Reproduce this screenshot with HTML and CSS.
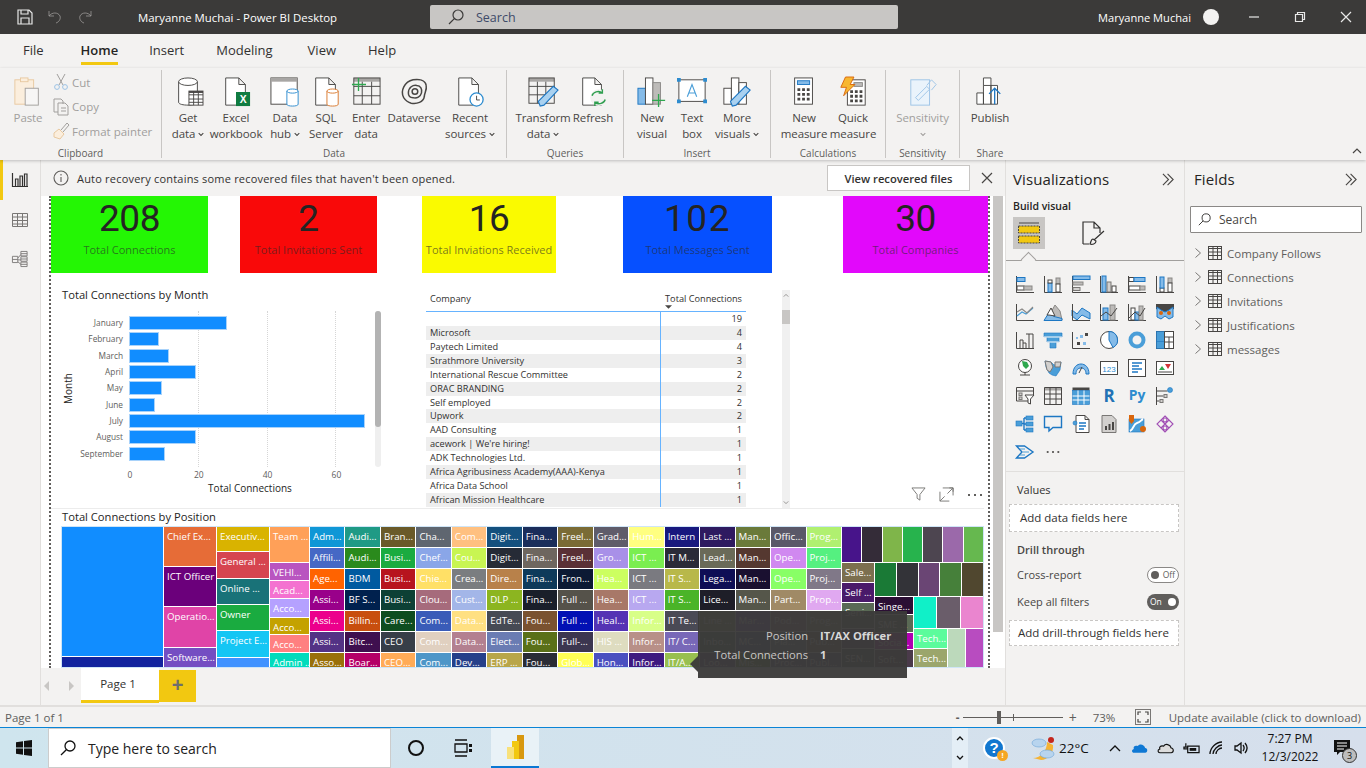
FILE: index.html
```html
<!DOCTYPE html>
<html lang="en">
<head>
<meta charset="utf-8">
<title>Power BI Desktop</title>
<link rel="stylesheet" href="styles.css">
</head>
<body>
<svg class="defs" width="0" height="0" aria-hidden="true">
  <defs>
    <symbol id="i-tbl" viewBox="0 0 14 14"><rect class="ln" x=".5" y=".5" width="13" height="13"/><path class="ln" d="M.5 2.5h13M.5 6h13M.5 9.5h13M5 .5v13M9.5 .5v13"/></symbol>
    <symbol id="i-dbl" viewBox="0 0 14 14"><path class="ln-d" d="M1 1l6 6-6 6M6 1l6 6-6 6"/></symbol>
    <symbol id="i-chev" viewBox="0 0 7 5"><path class="ln-d" d="M.8 .8L3.5 3.6 6.2 .8"/></symbol>
    <symbol id="i-mag" viewBox="0 0 16 16"><circle class="ln-d" cx="10" cy="6" r="5"/><path class="ln-d" d="M6.3 9.7L1 15"/></symbol>
  </defs>
</svg>
<div class="app">
  <header class="titlebar">
    <div class="qat">
      <svg class="qi" viewBox="0 0 16 16"><path class="ln-w" d="M1 1h11l3 3v11H1zM4 1v4h7V1M4 15v-6h8v6"/></svg>
      <svg class="qi dim" viewBox="0 0 16 16"><path class="ln-f" d="M2 2v5h5M2 7c3-4 9-4 11 0 1 3-1 6-4 7"/></svg>
      <svg class="qi dim" viewBox="0 0 16 16"><path class="ln-f" d="M14 2v5H9M14 7C11 3 5 3 3 7c-1 3 1 6 4 7"/></svg>
    </div>
    <div class="doc">Maryanne Muchai - Power BI Desktop</div>
    <div class="searchbox"><svg class="mag" viewBox="0 0 16 16"><use href="#i-mag"/></svg><span>Search</span></div>
    <div class="user">Maryanne Muchai</div>
    <div class="avatar"></div>
    <div class="winctl">
      <svg viewBox="0 0 10 10"><path class="ln-w" d="M0 5h10"/></svg>
      <svg viewBox="0 0 10 10"><path class="ln-w" d="M.5 2.5h7v7h-7zM2.5 2.5v-2h7v7h-2"/></svg>
      <svg viewBox="0 0 10 10"><path class="ln-w" d="M0 0l10 10M10 0L0 10"/></svg>
    </div>
  </header>

  <nav class="tabs">
    <span class="tab t-file">File</span>
    <span class="tab t-home">Home</span>
    <span class="tab t-insert">Insert</span>
    <span class="tab t-model">Modeling</span>
    <span class="tab t-view">View</span>
    <span class="tab">Help</span>
  </nav>

  <section class="ribbon">
    <div class="group g-clip">
      <div class="btns">
        <div class="rb faded w56">
          <svg class="ri" viewBox="0 0 32 32"><rect class="f-or" x="2" y="3" width="20" height="26"/><rect class="f-or" x="8" y="1" width="8" height="4"/><rect class="f-pg" x="13" y="12" width="14" height="18"/></svg>
          <span>Paste</span>
        </div>
        <div class="cliplist">
          <div class="ci"><svg viewBox="0 0 16 18"><path class="ln-f" d="M4 1l6 11M12 1L6 12"/><circle class="ln-bf" cx="4" cy="14" r="2.4"/><circle class="ln-bf" cx="12" cy="14" r="2.4"/></svg><span>Cut</span></div>
          <div class="ci"><svg viewBox="0 0 16 18"><path class="ln-f" d="M1 1h7l2 2v3M1 1v13h4"/><path class="ln-f" d="M5 5h7l3 3v9H5zM8 10h5M8 13h5"/></svg><span>Copy</span></div>
          <div class="ci"><svg viewBox="0 0 16 18"><path class="f-or" d="M1 11l5-4 5 5-4 5-6-2z"/><path class="ln-f" d="M8 8l6-7 2 2-6 7"/></svg><span>Format painter</span></div>
        </div>
      </div>
      <div class="glabel">Clipboard</div>
    </div>

    <div class="group g-data">
      <div class="btns">
        <div class="rb w40"><svg class="ri" viewBox="0 0 32 32"><path class="fw" d="M6 5v22c0 2 5 3 10 3s10-1 10-3V5"/><ellipse class="fw" cx="16" cy="5" rx="10" ry="4"/><rect class="fw" x="17" y="15" width="15" height="15"/><path class="ln" d="M17 19h15M17 23.500h15M17 27h15M22 15v15M27 15v15"/><rect class="fdk" x="17" y="15" width="15" height="2"/></svg><span>Get<br>data <svg class="chev" viewBox="0 0 7 5"><use href="#i-chev"/></svg></span></div>
        <div class="rb w56"><svg class="ri" viewBox="0 0 32 32"><path class="fw" d="M5 1h14l7 7v22H5zM19 1v7h7"/><rect class="fgn" x="16" y="16" width="15" height="15"/><text class="xl" x="23.500" y="28">X</text></svg><span>Excel<br>workbook</span></div>
        <div class="rb w42"><svg class="ri" viewBox="0 0 32 32"><rect class="fw" x="1" y="1" width="28" height="28"/><rect class="fgy" x="1" y="1" width="28" height="4"/><path class="fw-b" d="M18 15v14c0 1.500 3 2 6 2s6-.5 6-2V15"/><ellipse class="fw-b" cx="24" cy="15" rx="6" ry="2.200"/></svg><span>Data<br>hub <svg class="chev" viewBox="0 0 7 5"><use href="#i-chev"/></svg></span></div>
        <div class="rb w40"><svg class="ri" viewBox="0 0 32 32"><path class="fw" d="M5 1h14l7 7v22H5zM19 1v7h7"/><path class="fw-o" d="M17 15v14c0 1.500 3 2 6 2s6-.5 6-2V15"/><ellipse class="fw-o" cx="23" cy="15" rx="6" ry="2.200"/></svg><span>SQL<br>Server</span></div>
        <div class="rb w40"><svg class="ri" viewBox="0 0 32 32"><rect class="fgy" x="3" y="1" width="28" height="4"/><rect class="ln" x="3" y="1" width="28" height="28"/><path class="ln" d="M3 10h28M3 20h28M12 5v24M22 5v24"/><path class="ln-g2" d="M8 1v14M1 8h15"/></svg><span>Enter<br>data</span></div>
        <div class="rb w56"><svg class="ri" viewBox="0 0 32 32"><path class="ln-2" d="M5 22C1 15 6 5 15 3c6-1 13 0 14 6 1 5-2 8-2 12-1 6-8 8-14 7-4-1-6-3-8-6z"/><path class="ln-2" d="M10 17c0-6 5-9 9-8 4 0 6 4 5 8-1 4-5 6-9 5-3 0-5-2-5-5z"/><circle class="ln-2" cx="17" cy="15.500" r="3"/></svg><span>Dataverse</span></div>
        <div class="rb w56"><svg class="ri" viewBox="0 0 32 32"><path class="fw" d="M4 1h14l7 7v22H4zM18 1v7h7"/><circle class="fw-b2" cx="23" cy="24" r="7"/><path class="ln" d="M23 20v4.500h3.500"/></svg><span>Recent<br>sources <svg class="chev" viewBox="0 0 7 5"><use href="#i-chev"/></svg></span></div>
      </div>
      <div class="glabel">Data</div>
    </div>

    <div class="group g-query">
      <div class="btns">
        <div class="rb w54"><svg class="ri" viewBox="0 0 32 32"><rect class="fgy" x="1" y="1" width="27" height="4"/><rect class="ln" x="1" y="1" width="27" height="27"/><path class="ln" d="M1 10h27M1 19h27M10 5v23M19 5v23"/><path class="fb-pen" d="M11 26l2 5 4-1 15-16-5-4z"/></svg><span>Transform<br>data <svg class="chev" viewBox="0 0 7 5"><use href="#i-chev"/></svg></span></div>
        <div class="rb w46"><svg class="ri" viewBox="0 0 32 32"><path class="fw" d="M5 1h13l7 7v22H5zM18 1v7h7"/><circle class="bgk" cx="22" cy="22" r="9"/><path class="ln-g" d="M15 20c1-4 7-6 11-3M29 24c-1 4-7 6-11 3M26 13v4h-4M18 31v-4h4"/></svg><span>Refresh</span></div>
      </div>
      <div class="glabel">Queries</div>
    </div>

    <div class="group g-insert">
      <div class="btns">
        <div class="rb w40"><svg class="ri" viewBox="0 0 32 32"><rect class="bl" x="1" y="12" width="8" height="17"/><rect class="fw" x="9" y="1" width="8" height="28"/><rect class="gr" x="17" y="6" width="8" height="23"/><path class="ln-g2" d="M23 18v14M16 25h14"/></svg><span>New<br>visual</span></div>
        <div class="rb w40"><svg class="ri" viewBox="0 0 32 32"><rect class="fw" x="2" y="3" width="28" height="23"/><path class="ln-b" d="M11 21l5-13 5 13M13 17h6"/><path class="fb2" d="M0 1h4v4H0zM28 1h4v4h-4zM0 24h4v4H0zM28 24h4v4h-4z"/></svg><span>Text<br>box</span></div>
        <div class="rb w50"><svg class="ri" viewBox="0 0 32 32"><rect class="fw" x="2" y="12" width="8" height="17"/><rect class="fw" x="10" y="1" width="8" height="28"/><rect class="fw" x="18" y="6" width="8" height="23"/><path class="fb-pen" d="M9 26l2 5 4-1 15-16-5-4z"/></svg><span>More<br>visuals <svg class="chev" viewBox="0 0 7 5"><use href="#i-chev"/></svg></span></div>
      </div>
      <div class="glabel">Insert</div>
    </div>

    <div class="group g-calc">
      <div class="btns">
        <div class="rb w52"><svg class="ri" viewBox="0 0 32 32"><rect class="fw" x="6" y="1" width="19" height="28"/><rect class="bl" x="9" y="4" width="13" height="4"/><path class="dots" d="M9 12h3v3H9zM14 12h3v3h-3zM19 12h3v3h-3zM9 17h3v3H9zM14 17h3v3h-3zM19 17h3v3h-3zM9 22h3v3H9zM14 22h3v3h-3zM19 22h3v3h-3z"/></svg><span>New<br>measure</span></div>
        <div class="rb w46"><svg class="ri" viewBox="0 0 32 32"><rect class="fw" x="10" y="3" width="19" height="27"/><rect class="gr" x="17" y="6" width="9" height="4"/><path class="dots" d="M13 14h3v3h-3zM18 14h3v3h-3zM23 14h3v3h-3zM13 19h3v3h-3zM18 19h3v3h-3zM23 19h3v3h-3zM13 24h3v3h-3zM18 24h3v3h-3zM23 24h3v3h-3z"/><path class="bolt" d="M8 0h9l-4 8h5L6 20l3-9H3z"/></svg><span>Quick<br>measure</span></div>
      </div>
      <div class="glabel">Calculations</div>
    </div>

    <div class="group g-sens">
      <div class="btns">
        <div class="rb faded wfull"><svg class="ri" viewBox="0 0 32 32"><rect class="f-bf" x="3" y="3" width="20" height="27"/><path class="ln-bf" d="M8 22l12-12 3 3-12 12zM20 9l5-6 5 5-5 6"/></svg><span>Sensitivity<br><svg class="chev" viewBox="0 0 7 5"><use href="#i-chev"/></svg></span></div>
      </div>
      <div class="glabel">Sensitivity</div>
    </div>

    <div class="group g-share">
      <div class="btns">
        <div class="rb wfull"><svg class="ri" viewBox="0 0 32 32"><path class="fw" d="M2 17h7v12H2zM9 9h8v20H9zM9 9V1h8v8M17 9h7v20h-7z"/><path class="ln-b2" d="M21 29V12M15 18l6-6 6 6"/></svg><span>Publish</span></div>
      </div>
      <div class="glabel">Share</div>
    </div>
    <svg class="collapse" viewBox="0 0 10 6"><path class="ln-d" d="M1 5l4-4 4 4"/></svg>
  </section>

  <div class="main">
    <aside class="rail">
      <div class="rail-i on"><svg viewBox="0 0 16 14"><path class="ln-d" d="M.5 0v13.500H16M3.500 6h2.500v7.500H3.500zM8 3h2.500v10.500H8zM12.500 1H15v12.500h-2.500z"/></svg></div>
      <div class="rail-i"><svg viewBox="0 0 16 14"><path class="ln-m" d="M.5 .5h15v13H.5zM.5 4h15M.5 7.500h15M.5 11h15M5.500 .5v13M10.500 .5v13"/></svg></div>
      <div class="rail-i"><svg viewBox="0 0 18 18"><path class="ln-m" d="M.5 6h6v7h-6zM.5 9.500h6M10 .5h7v5h-7zM10 3h7M10 6.500h7v5h-7zM10 9h7M10 12.500h7v5h-7zM10 15h7M6.500 8l3.500-4M6.500 10h3.500M6.500 12l3.500 3"/></svg></div>
    </aside>

    <div class="center">
      <div class="notice">
        <svg class="info" viewBox="0 0 16 16"><circle class="ln-i" cx="8" cy="8" r="7"/><path class="ln-i" d="M8 7v5M8 4v1.500"/></svg>
        <span class="notice-text">Auto recovery contains some recovered files that haven't been opened.</span>
        <button class="recover">View recovered files</button>
        <svg class="close" viewBox="0 0 10 10"><path class="ln-d" d="M0 0l10 10M10 0L0 10"/></svg>
      </div>

      <div class="canvas">
        <div class="page">
          <div class="cards">
            <div class="card c-green"><div class="num">208</div><div class="cap">Total Connections</div></div>
            <div class="card c-red"><div class="num">2</div><div class="cap">Total Invitations Sent</div></div>
            <div class="card c-yellow"><div class="num">16</div><div class="cap">Total Inviations Received</div></div>
            <div class="card c-blue"><div class="num">102</div><div class="cap">Total Messages Sent</div></div>
            <div class="card c-magenta"><div class="num">30</div><div class="cap">Total Companies</div></div>
          </div>

          <div class="mid">
            <div class="barchart">
              <h3 class="vtitle">Total Connections by Month</h3>
              <div class="chartbody">
                <div class="ytitle">Month</div>
                <div class="plotwrap">
                  <div class="plotrow">
                    <div class="labels">
                      <span>January</span><span>February</span><span>March</span><span>April</span><span>May</span><span>June</span><span>July</span><span>August</span><span>September</span>
                    </div>
                    <div class="plot">
                      <div class="gridlines"><i></i><i></i><i></i></div>
                      <div class="bar" style="width:96px"></div>
                      <div class="bar" style="width:28px"></div>
                      <div class="bar" style="width:38px"></div>
                      <div class="bar" style="width:65px"></div>
                      <div class="bar" style="width:31px"></div>
                      <div class="bar" style="width:24px"></div>
                      <div class="bar" style="width:234px"></div>
                      <div class="bar" style="width:65px"></div>
                      <div class="bar" style="width:34px"></div>
                    </div>
                    <div class="vscroll"><div class="vthumb"></div></div>
                  </div>
                  <div class="ticks"><span>0</span><span>20</span><span>40</span><span>60</span></div>
                  <div class="xtitle">Total Connections</div>
                </div>
              </div>
            </div>

            <div class="tablewrap">
              <div class="tr th"><div class="td1">Company</div><div class="td2">Total Connections<svg class="sort" viewBox="0 0 8 4"><path class="fdk" d="M0 0h8L4 4z"/></svg></div></div>
              <div class="tr"><div class="td1"></div><div class="td2">19</div></div>
              <div class="tr alt"><div class="td1">Microsoft</div><div class="td2">4</div></div>
              <div class="tr"><div class="td1">Paytech Limited</div><div class="td2">4</div></div>
              <div class="tr alt"><div class="td1">Strathmore University</div><div class="td2">3</div></div>
              <div class="tr"><div class="td1">International Rescue Committee</div><div class="td2">2</div></div>
              <div class="tr alt"><div class="td1">ORAC BRANDING</div><div class="td2">2</div></div>
              <div class="tr"><div class="td1">Self employed</div><div class="td2">2</div></div>
              <div class="tr alt"><div class="td1">Upwork</div><div class="td2">2</div></div>
              <div class="tr"><div class="td1">AAD Consulting</div><div class="td2">1</div></div>
              <div class="tr alt"><div class="td1">acework | We're hiring!</div><div class="td2">1</div></div>
              <div class="tr"><div class="td1">ADK Technologies Ltd.</div><div class="td2">1</div></div>
              <div class="tr alt"><div class="td1">Africa Agribusiness Academy(AAA)-Kenya</div><div class="td2">1</div></div>
              <div class="tr"><div class="td1">Africa Data School</div><div class="td2">1</div></div>
              <div class="tr alt"><div class="td1">African Mission Healthcare</div><div class="td2">1</div></div>
            </div>

            <div class="tscroll">
              <svg viewBox="0 0 8 5"><path class="ln-m" d="M1 4l3-3 3 3"/></svg>
              <div class="tthumb"></div>
              <svg viewBox="0 0 8 5"><path class="ln-m" d="M1 1l3 3 3-3"/></svg>
            </div>

            <div class="vhead">
              <svg viewBox="0 0 16 16"><path class="ln-m" d="M1 1h14l-5.500 7v6l-3-2V8z"/></svg>
              <svg viewBox="0 0 16 16"><path class="ln-m" d="M1 5V15h10M4 1h11v8M9 7l6-6M11 1h4v4M1 15l5-5"/></svg>
              <svg class="more" viewBox="0 0 16 4"><path class="dots-m" d="M1 1h2v2H1zM7 1h2v2H7zM13 1h2v2h-2z"/></svg>
            </div>
          </div>

          <h3 class="vtitle tm-title">Total Connections by Position</h3>
          <div class="treemap">
            <div class="tcol w101">
              <div class="t" style="height:136px;background:#118dff"></div>
              <div class="t" style="height:10px;background:#12239e"></div>
            </div>
            <div class="tcol w52">
              <div class="t" style="height:40px;background:#e66c37">Chief Ex...</div>
              <div class="t" style="height:41px;background:#6b007b">ICT Officer</div>
              <div class="t" style="height:41px;background:#e044a7">Operatio...</div>
              <div class="t" style="height:20px;background:#744ec2">Software...</div>
            </div>
            <div class="tcol w52">
              <div class="t" style="height:26px;background:#d9b300">Executiv...</div>
              <div class="t" style="height:27px;background:#d64550">General ...</div>
              <div class="t" style="height:27px;background:#197278">Online ...</div>
              <div class="t" style="height:27px;background:#1aab40">Owner</div>
              <div class="t" style="height:27px;background:#15c6f4">Project E...</div>
              <div class="t" style="height:10px;background:#4092ff"></div>
            </div>
            <div class="tcol w39">
              <div class="t" style="height:36px;background:#ffa058">Team ...</div>
              <div class="t" style="height:17px;background:#b955c0">VEHI...</div>
              <div class="t" style="height:17px;background:#f472d0">Acad...</div>
              <div class="t" style="height:18px;background:#b5a1ff">Acco...</div>
              <div class="t" style="height:17px;background:#c4a200">Acco...</div>
              <div class="t" style="height:17px;background:#ff8080">Acco...</div>
              <div class="t" style="height:14px;background:#00dbbc">Admin ...</div>
            </div>
            <div class="tgrid">
              <div class="t" style="background:#0f97d6">Adm...</div><div class="t" style="background:#4668c5">Affili...</div><div class="t" style="background:#ff6300">Age...</div><div class="t" style="background:#99008a">Assi...</div><div class="t" style="background:#ec008c">Assi...</div><div class="t" style="background:#533285">Assi...</div><div class="t" style="background:#99700a">Asso...</div>
              <div class="t" style="background:#1f9a85">Audi...</div><div class="t" style="background:#2a8a1c">Audi...</div><div class="t" style="background:#005aa0">BDM</div><div class="t" style="background:#00214e">BF S...</div><div class="t" style="background:#c84e0e">Billin...</div><div class="t" style="background:#3f0f4f">Bitc...</div><div class="t" style="background:#b40068">Boar...</div>
              <div class="t" style="background:#6a5a29">Bran...</div><div class="t" style="background:#1aab40">Busi...</div><div class="t" style="background:#b7141e">Busi...</div><div class="t" style="background:#0d4035">Busi...</div><div class="t" style="background:#0e4d1f">Care...</div><div class="t" style="background:#373e48">CEO</div><div class="t" style="background:#ffab57">CEO...</div>
              <div class="t" style="background:#5f6670">Cha...</div><div class="t" style="background:#8aa6e8">Chef...</div><div class="t" style="background:#ffe066">Chie...</div><div class="t" style="background:#a66b7c">Clou...</div><div class="t" style="background:#3a5cb8">Com...</div><div class="t" style="background:#e0d0c0">Com...</div><div class="t" style="background:#4d96c8">Com...</div>
              <div class="t" style="background:#ffc080">Com...</div><div class="t" style="background:#c8f552">Cou...</div><div class="t" style="background:#7a7d80">Crea...</div><div class="t" style="background:#a3b6e8">Cust...</div><div class="t" style="background:#ffe082">Data...</div><div class="t" style="background:#b38090">Data...</div><div class="t" style="background:#25408a">Dev...</div>
              <div class="t" style="background:#14507e">Digit...</div><div class="t" style="background:#262b36">Digit...</div><div class="t" style="background:#b8814a">Dire...</div><div class="t" style="background:#8cb520">DLP ...</div><div class="t" style="background:#464a54">EdTe...</div><div class="t" style="background:#6a7cb3">Elect...</div><div class="t" style="background:#b8a64a">ERP ...</div>
              <div class="t" style="background:#1a2d5a">Fina...</div><div class="t" style="background:#6e665f">Fina...</div><div class="t" style="background:#0e3a5a">Fina...</div><div class="t" style="background:#1a1f2a">Fina...</div><div class="t" style="background:#7a5230">Fou...</div><div class="t" style="background:#5a7018">Fou...</div><div class="t" style="background:#2a2d36">Fou...</div>
              <div class="t" style="background:#7a6b35">Freel...</div><div class="t" style="background:#5a3036">Freel...</div><div class="t" style="background:#0c1a34">Fron...</div><div class="t" style="background:#55524a">Full ...</div><div class="t" style="background:#0210b4">Full ...</div><div class="t" style="background:#3c3650">Full-...</div><div class="t" style="background:#ffff55">Glob...</div>
              <div class="t" style="background:#5f5c6a">Grad...</div><div class="t" style="background:#a890e8">Gro...</div><div class="t" style="background:#ccff60">Hea...</div><div class="t" style="background:#a87868">Hea...</div><div class="t" style="background:#5434b4">Heal...</div><div class="t" style="background:#dedcc0">HIS ...</div><div class="t" style="background:#4a50c0">Hon...</div>
              <div class="t" style="background:#ffff80">Hum...</div><div class="t" style="background:#7aee50">ICT ...</div><div class="t" style="background:#7a7a80">ICT ...</div><div class="t" style="background:#b8a8f0">ICT ...</div><div class="t" style="background:#d8ff88">Infor...</div><div class="t" style="background:#b89088">Infor...</div><div class="t" style="background:#3e1a80">Infor...</div>
              <div class="t" style="background:#18187e">Intern</div><div class="t" style="background:#2a2a38">IT M...</div><div class="t" style="background:#b8b84a">IT S...</div><div class="t" style="background:#4ab428">IT S...</div><div class="t" style="background:#4a4a55">IT Te...</div><div class="t" style="background:#7868b8">IT/ C...</div><div class="t" style="background:#98c050">IT/A...</div>
              <div class="t" style="background:#2e1a60">Last ...</div><div class="t" style="background:#6a6a58">Lead...</div><div class="t" style="background:#0e0e55">Lega...</div><div class="t" style="background:#1e1e28">Lice...</div><div class="t" style="background:#8a9a5a">Line ...</div><div class="t" style="background:#3a6a5a">Inbo...</div><div class="t" style="background:#5a3a7a">Loo...</div>
              <div class="t" style="background:#6a7a3a">Man...</div><div class="t" style="background:#553830">Man...</div><div class="t" style="background:#1a1030">Man...</div><div class="t" style="background:#55564a">Man...</div><div class="t" style="background:#6a3ac0">Mar...</div><div class="t" style="background:#3a5a9a">MC...</div><div class="t" style="background:#5a8a2a">Mis...</div>
              <div class="t" style="background:#5a5868">Offic...</div><div class="t" style="background:#d088f0">Ope...</div><div class="t" style="background:#88ff66">Ope...</div><div class="t" style="background:#a08a66">Part...</div><div class="t" style="background:#a06a8a">Pod...</div><div class="t" style="background:#6a8a9a">Pla...</div><div class="t" style="background:#5a4a8a">Proc...</div>
              <div class="t" style="background:#b0f070">Prog...</div><div class="t" style="background:#55f080">Proj...</div><div class="t" style="background:#807888">Proj...</div><div class="t" style="background:#e0a8f0">Prop...</div><div class="t" style="background:#9a9a6a">Prog...</div><div class="t" style="background:#7a6a5a">Pub...</div><div class="t" style="background:#4a4a7a">Publ...</div>
            </div>
            <div class="tright">
              <div class="trow h35">
                <div class="t" style="background:#47148a"></div><div class="t" style="background:#342c38"></div><div class="t" style="background:#7fb54a"></div><div class="t" style="background:#27b34d"></div><div class="t" style="background:#4d4550"></div><div class="t" style="background:#9b69aa"></div><div class="t" style="background:#66b84f"></div>
              </div>
              <div class="trow fill">
                <div class="tcol w32">
                  <div class="t" style="height:21px;background:#7c6f4f">Sale...</div>
                  <div class="t" style="height:21px;background:#4a1a6a">Self ...</div>
                  <div class="t" style="height:27px;background:#5a6a55">Seni...</div>
                  <div class="t" style="height:21px;background:#4a3a6a"></div>
                  <div class="t" style="height:20px;background:#3a4a4a">SEN...</div>
                </div>
                <div class="tstack">
                  <div class="trow h34">
                    <div class="t" style="background:#1a7a36"></div><div class="t" style="background:#333338"></div><div class="t" style="background:#6a4574"></div><div class="t" style="background:#46803a"></div><div class="t" style="background:#50472f"></div>
                  </div>
                  <div class="trow fill">
                    <div class="tcol w38">
                      <div class="t" style="height:18px;background:#2b0f34">Singe...</div>
                      <div class="t" style="height:18px;background:#5a6a55">SME ...</div>
                      <div class="t" style="height:18px;background:#b000b0">Socia...</div>
                      <div class="t" style="height:18px;background:#4a3a4a">Soft...</div>
                    </div>
                    <div class="tstack">
                      <div class="trow h31">
                        <div class="t" style="background:#10f0c8"></div><div class="t" style="background:#6a5d6a"></div><div class="t" style="background:#ea85cf"></div>
                      </div>
                      <div class="trow fill">
                        <div class="tcol w33">
                          <div class="t" style="height:19px;background:#5cfc9c">Tech...</div>
                          <div class="t" style="height:19px;background:#9ba66c">Tech...</div>
                        </div>
                        <div class="t wide" style="background:#bcd9bb"></div>
                        <div class="t wide" style="background:#b84cc0"></div>
                      </div>
                    </div>
                  </div>
                </div>
              </div>
            </div>
          </div>
        </div>
        <div class="cscroll"></div>
      </div>

      <div class="pagetabs">
        <svg class="pg-arrow" viewBox="0 0 6 10"><path class="fa-gy" d="M5 0v10L0 5z"/></svg>
        <svg class="pg-arrow" viewBox="0 0 6 10"><path class="fa-gy" d="M1 0v10l5-5z"/></svg>
        <div class="pagetab">Page 1</div>
        <div class="addtab">+</div>
      </div>

      <div class="tooltip">
        <span class="tk">Position</span><span class="tv">IT/AX Officer</span>
        <span class="tk">Total Connections</span><span class="tv">1</span>
        <i class="tip-arrow"></i>
      </div>
    </div>

    <aside class="viz">
      <div class="phead"><span>Visualizations</span><svg class="dbl" viewBox="0 0 14 14"><use href="#i-dbl"/></svg></div>
      <div class="build">Build visual</div>
      <div class="vtabs">
        <div class="vtab on"><svg viewBox="0 0 24 24"><path class="ln" d="M2 2h20"/><rect class="fy" x="1.500" y="5" width="21" height="7"/><rect class="fy" x="1.500" y="15" width="21" height="7"/></svg></div>
        <div class="vtab"><svg viewBox="0 0 24 24"><path class="ln-d" d="M2 23V1h11l6 6v5M13 1v6h6M2 23h6"/><path class="ln-d" d="M23 10L13 19M9 23c2 1 6 0 6-3l-3-2c-2 0-2 3-3 5z"/></svg></div>
      </div>
      <div class="vline"><i></i></div>
      <div class="gallery">
        <svg viewBox="0 0 18 18"><path class="ln" d="M.5 1v16.500H18"/><rect class="bl" x="1" y="2.500" width="8" height="4"/><rect class="fw" x="9" y="2.500" width="0" height="4"/><rect class="fw" x="1" y="11" width="7" height="4"/><rect class="gr" x="8" y="11" width="8" height="4"/></svg>
        <svg viewBox="0 0 18 18"><path class="ln" d="M.5 1v16.500H18"/><rect class="bl" x="4" y="8" width="4" height="9"/><rect class="fw" x="4" y="5" width="4" height="3"/><rect class="gr" x="12" y="3" width="4" height="6"/><rect class="fw" x="12" y="9" width="4" height="8"/></svg>
        <svg viewBox="0 0 18 18"><path class="ln" d="M.5 1v16.500H18"/><rect class="bl" x="1" y="1" width="17" height="3.500"/><rect class="gr" x="1" y="7" width="10" height="3"/><rect class="gy" x="1" y="12.500" width="7" height="3"/></svg>
        <svg viewBox="0 0 18 18"><path class="ln" d="M.5 1v16.500H18"/><rect class="bl" x="2" y="1" width="4" height="16"/><rect class="gy" x="7" y="7" width="4" height="10"/><rect class="fw" x="12" y="11" width="4" height="6"/></svg>
        <svg viewBox="0 0 18 18"><path class="ln" d="M.5 1v16.500H18"/><rect class="fw" x="1" y="2.500" width="5" height="4"/><rect class="bl" x="6" y="2.500" width="11" height="4"/><rect class="fw" x="1" y="11" width="11" height="4"/><rect class="gr" x="12" y="11" width="5" height="4"/></svg>
        <svg viewBox="0 0 18 18"><path class="ln" d="M.5 1v16.500H18"/><rect class="fw" x="4" y="13" width="4" height="4"/><rect class="bl" x="4" y="2" width="4" height="11"/><rect class="gr" x="12" y="3" width="4" height="5"/><rect class="fw" x="12" y="8" width="4" height="9"/></svg>

        <svg viewBox="0 0 18 18"><path class="ln" d="M.5 1v16.500H18"/><path class="ln-b" d="M1 13l5-4 4 2 7-6"/><path class="ln-gy" d="M1 9l5-3 5 4 6-6"/></svg>
        <svg viewBox="0 0 18 18"><path class="gr" d="M6 11l5-9 5 6 2 9H6z"/><path class="bl" d="M0 17.500l5-8 5 4 8 2v2z"/><path class="fw" d="M3 12L7 5l4 8-6-1z"/></svg>
        <svg viewBox="0 0 18 18"><path class="bl" d="M0 7l5 4 5-6 8 5v6l-8-4-5 5-5-4z"/><path class="ln" d="M.5 1v16.500H18"/></svg>
        <svg viewBox="0 0 18 18"><path class="ln" d="M.5 1v16.500H18"/><rect class="bl" x="3" y="5" width="5" height="12"/><rect class="gr" x="10" y="2" width="5" height="15"/><path class="ln" d="M1 13l5-4 5 4 6-8"/></svg>
        <svg viewBox="0 0 18 18"><path class="ln" d="M.5 1v16.500H18"/><rect class="fw" x="3" y="5" width="4" height="12"/><rect class="bl" x="7" y="9" width="4" height="8"/><rect class="gr" x="11" y="3" width="4" height="14"/><path class="ln" d="M1 15l6-6 5 4 5-8"/></svg>
        <svg viewBox="0 0 18 18"><path class="fdk" d="M0 1h18v5l-5 2v3l-4 1-4-1V8L0 6z"/><path class="bl" d="M1 4l4 3 4 2 4-2 4-3v10l-4 2-4-3-4 3-4-2z"/><circle class="for" cx="5" cy="10" r="2"/><circle class="for" cx="13" cy="10" r="2"/></svg>

        <svg viewBox="0 0 18 18"><path class="ln" d="M.5 1v16.500H18M4 17V9h3v8M7 12h3v5M10 3h3v14M13 3h4v14"/></svg>
        <svg viewBox="0 0 18 18"><path class="fb3" d="M0 2h18v4h-3v5h-3v6H6v-6H3V6H0z"/><path class="ln-wh" d="M0 6h18M3 11h12"/></svg>
        <svg viewBox="0 0 18 18"><path class="ln" d="M.5 1v16.500H18"/><path class="fdk" d="M13 2h3v3h-3zM5 11h3v3H5zM14 10h0"/><path class="fb4" d="M8 4h3v3H8zM11 11h3v3h-3zM4 6h2v2H4z"/></svg>
        <svg viewBox="0 0 18 18"><circle class="fw" cx="9" cy="9" r="8.500"/><path class="bl" d="M9 .5A8.500 8.500 0 0 1 13 16.500L9 9z"/></svg>
        <svg viewBox="0 0 18 18"><circle class="ring" cx="9" cy="9" r="6.500"/></svg>
        <svg viewBox="0 0 18 18"><rect class="fw" x=".5" y=".5" width="17" height="17"/><rect class="fb3" x=".5" y=".5" width="8" height="10"/><rect class="fb3" x=".5" y="10.500" width="8" height="7"/><path class="ln" d="M8.500 .5v17M8.500 6h9M13 6v11M8.500 11h9"/></svg>

        <svg viewBox="0 0 18 18"><circle class="fw" cx="9" cy="7" r="6.500"/><path class="fg2" d="M6 2l5 1 2 4-3 3-3-3z"/><path class="ln" d="M4 16h10M9 13v3"/></svg>
        <svg viewBox="0 0 18 18"><path class="fb3" d="M1 2l6 1 3 3 7-3-1 8-4 6-4-1-3-2-3-6z"/><path class="gy" d="M1 2l6 1 2 5-3 5-3-2z"/><path class="gy" d="M11 3l6 0-1 5-5 0z"/></svg>
        <svg viewBox="0 0 18 14"><path class="bl" d="M1 13C1 6 5 3 9 3s8 3 8 10h-3c0-4-2-6-5-6s-5 2-5 6z"/><path class="ln" d="M7 12l3-6"/></svg>
        <svg viewBox="0 0 18 14"><rect class="fw" x=".5" y=".5" width="17" height="13"/><text class="t123" x="9" y="10.500">123</text></svg>
        <svg viewBox="0 0 18 18"><rect class="fw" x=".5" y=".5" width="17" height="17"/><path class="ln-b2" d="M4 4h10M4 7h7M4 10h10M4 13h6"/></svg>
        <svg viewBox="0 0 18 14"><rect class="fw" x=".5" y=".5" width="17" height="13"/><path class="fg3" d="M3 9l3-4 3 4z"/><path class="frd" d="M9 3h6l-3 5z"/><path class="ln" d="M2 11h14"/></svg>

        <svg viewBox="0 0 18 18"><path class="ln" d="M12 14H.5V.5h17V9M.5 4h17"/><rect class="gy" x="3" y="6" width="3" height="2.500"/><rect class="gy" x="3" y="10" width="3" height="2.500"/><path class="fw" d="M9 8h9l-3.500 4v5L12 16v-4z"/></svg>
        <svg viewBox="0 0 18 18"><rect class="fgy" x=".5" y=".5" width="17" height="3"/><path class="ln" d="M.5 .5h17v17H.5zM.5 7h17M.5 12h17M6 .5v17M12 .5v17"/></svg>
        <svg viewBox="0 0 18 18"><rect class="fdk" x=".5" y=".5" width="17" height="3"/><rect class="fb3" x=".5" y="3.500" width="17" height="14"/><path class="ln-wh" d="M.5 9h17M.5 13h17M6 3.500v14M12 3.500v14"/></svg>
        <svg viewBox="0 0 18 18"><text class="gl-r" x="9" y="15">R</text></svg>
        <svg viewBox="0 0 22 18"><text class="gl-py" x="11" y="14">Py</text></svg>
        <svg viewBox="0 0 18 18"><path class="ln" d="M.5 0v18M.5 4h11M.5 9h7M.5 14h3"/><circle class="fb3" cx="14" cy="3" r="2.500"/><rect class="gy" x="8" y="7.500" width="3" height="3"/><rect class="gy" x="4" y="12.500" width="3" height="3"/></svg>

        <svg viewBox="0 0 18 18"><rect class="fb3" x="0" y="6" width="6" height="5"/><rect class="fb3" x="10" y="1" width="7" height="4"/><rect class="fb3" x="10" y="7" width="7" height="4"/><rect class="fb3" x="10" y="13" width="7" height="4"/><path class="ln-b2" d="M6 8.500h2M8 3v12M8 3h2M8 9h2M8 15h2"/></svg>
        <svg viewBox="0 0 18 18"><path class="ln-b2" d="M.5 1.500h17v11H9L5 16v-3.500H.5z"/></svg>
        <svg viewBox="0 0 18 18"><path class="fw" d="M4 .5h9l4 4v13H4zM13 .5v4h4"/><circle class="fb3" cx="3" cy="8" r="2"/><path class="ln-b2" d="M7 8h7M7 11h7M7 14h5"/></svg>
        <svg viewBox="0 0 18 18"><path class="gy" d="M2 .5h10l4 4v13H2z"/><path class="fdk" d="M5 11h2v4H5zM8.500 9h2v6h-2zM12 7h2v8h-2z"/></svg>
        <svg viewBox="0 0 18 18"><rect class="fb3" x="1" y="4" width="15" height="13"/><path class="ln-wh2" d="M2 16C6 14 5 9 9 8s4-3 6-4"/><path class="for" d="M1 0h5v6L3.500 9 1 6z"/><circle class="for" cx="15" cy="14" r="3"/></svg>
        <svg viewBox="0 0 18 18"><path class="ln-p" d="M9 1l8 8-8 8-8-8zM5 5l8 8M13 5l-8 8"/><circle class="ln-p" cx="9" cy="5" r="2"/><circle class="ln-p" cx="9" cy="13" r="2"/></svg>

        <svg viewBox="0 0 18 14"><path class="ln-b2" d="M.5 1h8L17 7l-8.500 6H.5L6 7z"/><path class="ln-b" d="M4 4h5M7 7h6M4 10h5"/></svg>
        <svg class="gmore" viewBox="0 0 18 4"><path class="dots-m" d="M2 1h2v2H2zM8 1h2v2H8zM14 1h2v2h-2z"/></svg>
      </div>
      <div class="wells">
        <div class="wlabel">Values</div>
        <div class="well">Add data fields here</div>
        <div class="drill">Drill through</div>
        <div class="opt"><span>Cross-report</span><span class="toggle off"><i></i>Off</span></div>
        <div class="opt"><span>Keep all filters</span><span class="toggle on">On<i></i></span></div>
        <div class="well w2">Add drill-through fields here</div>
      </div>
    </aside>

    <aside class="fields">
      <div class="phead"><span>Fields</span><svg class="dbl" viewBox="0 0 14 14"><use href="#i-dbl"/></svg></div>
      <div class="fsearch"><svg class="mag2" viewBox="0 0 16 16"><use href="#i-mag"/></svg><span>Search</span></div>
      <ul class="flist">
        <li><svg class="fchev" viewBox="0 0 6 10"><path class="ln-m" d="M.5 .5L5.500 5 .5 9.500"/></svg><svg class="ftbl" viewBox="0 0 14 14"><use href="#i-tbl"/></svg>Company Follows</li>
        <li><svg class="fchev" viewBox="0 0 6 10"><path class="ln-m" d="M.5 .5L5.500 5 .5 9.500"/></svg><svg class="ftbl" viewBox="0 0 14 14"><use href="#i-tbl"/></svg>Connections</li>
        <li><svg class="fchev" viewBox="0 0 6 10"><path class="ln-m" d="M.5 .5L5.500 5 .5 9.500"/></svg><svg class="ftbl" viewBox="0 0 14 14"><use href="#i-tbl"/></svg>Invitations</li>
        <li><svg class="fchev" viewBox="0 0 6 10"><path class="ln-m" d="M.5 .5L5.500 5 .5 9.500"/></svg><svg class="ftbl" viewBox="0 0 14 14"><use href="#i-tbl"/></svg>Justifications</li>
        <li><svg class="fchev" viewBox="0 0 6 10"><path class="ln-m" d="M.5 .5L5.500 5 .5 9.500"/></svg><svg class="ftbl" viewBox="0 0 14 14"><use href="#i-tbl"/></svg>messages</li>
      </ul>
    </aside>
  </div>

  <footer class="status">
    <span class="pg">Page 1 of 1</span>
    <div class="zoom">
      <span class="zm">-</span>
      <div class="slider"><i class="knob"></i><i class="mid-tick"></i></div>
      <span class="zp">+</span>
      <span class="pct">73%</span>
      <svg class="fit" viewBox="0 0 16 16"><rect class="ln-m" x=".5" y=".5" width="15" height="15"/><path class="ln-d" d="M3 6V3h3M10 3h3v3M13 10v3h-3M6 13H3v-3"/></svg>
      <span class="upd">Update available (click to download)</span>
    </div>
  </footer>

  <footer class="taskbar">
    <svg class="win" viewBox="0 0 16 16"><path class="fblk" d="M0 2.200l7-1v6.300H0zM8 1l8-1v7.500H8zM0 8.500h7v6.300l-7-1zM8 8.500h8V16l-8-1.100z"/></svg>
    <div class="tsearch"><svg class="tmag" viewBox="0 0 16 16"><path class="ln-blk" d="M6.300 9.700L1 15"/><circle class="ln-blk" cx="10" cy="6" r="5"/></svg><span>Type here to search</span></div>
    <div class="cortana"></div>
    <svg class="tview" viewBox="0 0 18 18"><path class="ln-blk" d="M1 1h12M1 17h12M1 5h12v8H1z"/><path class="fblk" d="M15 5h3v3h-3zM15 10h3v3h-3z"/></svg>
    <div class="tapp"><svg viewBox="0 0 20 24"><rect class="pb1" x="12" y="0" width="7" height="24"/><rect class="pb2" x="7" y="6" width="7" height="18"/><rect class="pb3" x="2" y="12" width="7" height="12"/></svg></div>
    <div class="tray">
      <div class="trayscroll"><svg viewBox="0 0 8 5"><path class="ln-blk" d="M1 4l3-3 3 3"/></svg><svg viewBox="0 0 8 5"><path class="ln-blk" d="M1 1l3 3 3-3"/></svg></div>
      <div class="helpic"><span>?</span><i>!</i></div>
      <svg class="wx" viewBox="0 0 24 24"><path class="wsun" d="M2 22C10 22 16 15 16 6L22 9c1 8-5 15-12 15z"/><circle class="wred" cx="20" cy="4" r="3"/><ellipse class="wcl" cx="8" cy="7" rx="7" ry="4"/><ellipse class="wcl" cx="16" cy="18" rx="7" ry="4"/></svg>
      <span class="temp">22°C</span>
      <svg class="ti w12" viewBox="0 0 12 8"><path class="ln-blk" d="M1 7l5-5 5 5"/></svg>
      <svg class="ti w16" viewBox="0 0 18 12"><path class="fod" d="M3 11h12c3 0 3-5 0-5C14 2 9 1 7 4 4 3 2 5 3 7c-3 1-2 4 0 4z"/></svg>
      <svg class="ti w16" viewBox="0 0 18 12"><path class="fcl" d="M3 11h12c3 0 3-5 0-5C14 2 9 1 7 4 4 3 2 5 3 7c-3 1-2 4 0 4z"/></svg>
      <svg class="ti w16" viewBox="0 0 18 12"><path class="ln-blk" d="M5 4H17v7H5zM3 1v4M1 5h4v2H1z"/><rect class="fblk" x="7" y="6" width="7" height="3"/></svg>
      <svg class="ti w14" viewBox="0 0 14 14"><path class="ln-blk" d="M1 13C1 7 7 1 13 1M4 13c0-4 5-9 9-9M7 13c0-3 3-6 6-6"/></svg>
      <svg class="ti w14" viewBox="0 0 14 14"><path class="ln-blk" d="M1 5v4h2l4 3V2L3 5zM9 4c1.500 2 1.500 4 0 6M11 2c2.500 3 2.500 7 0 10"/></svg>
      <div class="clock"><span>7:27 PM</span><span>12/3/2022</span></div>
      <div class="notif"><svg viewBox="0 0 16 16"><path class="fblk" d="M0 0h16v12H6l-3 3v-3H0z"/><path class="ln-wh" d="M3 3h10M3 6h10M3 9h7"/></svg><span class="badge">3</span></div>
    </div>
  </footer>
</div>
</body>
</html>
```
FILE: styles.css
```css
* { box-sizing: border-box; }
html, body { margin: 0; padding: 0; }
body { width: 1366px; height: 768px; overflow: hidden; font-family: "Open Sans", "Noto Sans", sans-serif; color: #323130; background: #f3f2f1; }
.defs { position: absolute; }
svg { display: block; flex: none; overflow: visible; }
h3 { margin: 0; font-weight: 400; }

.ln { fill: none; stroke: #484644; stroke-width: 1; }
.ln-d { fill: none; stroke: currentColor; stroke-width: 1.2; }
.ln-w { fill: none; stroke: #e8e8e8; stroke-width: 1.2; }
.ln-f { fill: none; stroke: #a19f9d; stroke-width: 1; }
.ln-m { fill: none; stroke: #797775; stroke-width: 1; }
.ln-i { fill: none; stroke: #605e5c; stroke-width: 1.1; }
.ln-bf { fill: none; stroke: #9cc3e6; stroke-width: 1; }
.ln-2 { fill: none; stroke: #484644; stroke-width: 1.6; }
.ln-b { fill: none; stroke: #4a9ed8; stroke-width: 1.2; }
.ln-b2 { fill: none; stroke: #1d77c3; stroke-width: 1.4; }
.ln-g { fill: none; stroke: #2f9e4f; stroke-width: 1.5; }
.ln-g2 { fill: none; stroke: #2fa84f; stroke-width: 1.4; }
.ln-gy { fill: none; stroke: #8a8886; stroke-width: 1.2; }
.ln-wh { fill: none; stroke: #fff; stroke-width: 1; }
.ln-wh2 { fill: none; stroke: #fff; stroke-width: 2; }
.ln-p { fill: none; stroke: #a14fb5; stroke-width: 1.1; }
.ln-blk { fill: none; stroke: #111; stroke-width: 1.3; }
.fw { fill: #fff; stroke: #484644; stroke-width: 1; }
.fw-b { fill: #fff; stroke: #2d8ccf; stroke-width: 1; }
.fw-b2 { fill: #fff; stroke: #2d8ccf; stroke-width: 1.4; }
.fw-o { fill: #fff; stroke: #d9782c; stroke-width: 1; }
.bgk { fill: #f3f2f1; }
.fgy { fill: #a8a6a4; }
.fdk { fill: #484644; }
.fgn { fill: #107c41; }
.xl { font: 700 11px "Liberation Sans", sans-serif; fill: #fff; text-anchor: middle; }
.bl { fill: #85bbe8; stroke: #1d77c3; stroke-width: 1; }
.gr { fill: #bdbbb9; stroke: #8a8886; stroke-width: 1; }
.gy { fill: #d2d0ce; stroke: #797775; stroke-width: 1; }
.fb2 { fill: #2d8ccf; }
.fb3 { fill: #4a9ed8; stroke: #1d77c3; stroke-width: .6; }
.fb4 { fill: #85bbe8; }
.fb-pen { fill: #a9d1f0; stroke: #1d77c3; stroke-width: 1.2; }
.dots { fill: #484644; }
.dots-m { fill: #605e5c; }
.bolt { fill: #f7b731; stroke: #d9660c; stroke-width: 1; }
.f-or { fill: #fbeedd; stroke: #e8c9a0; stroke-width: 1; }
.f-pg { fill: #f7f6f5; stroke: #a19f9d; stroke-width: 1; }
.f-bf { fill: #eaf3fb; stroke: #9cc3e6; stroke-width: 1; }
.fy { fill: #f2c811; stroke: #484644; stroke-width: 1; stroke-dasharray: 2 1; }
.for { fill: #d9660c; }
.ring { fill: none; stroke: #4a9ed8; stroke-width: 4; }
.fg2 { fill: #2fa84f; }
.fg3 { fill: #2fa84f; }
.frd { fill: #d13438; }
.t123 { font: 8px "Liberation Sans", sans-serif; fill: #2d8ccf; text-anchor: middle; }
.gl-r { font: 700 17px "Open Sans", sans-serif; fill: #2272b5; text-anchor: middle; }
.gl-py { font: 700 17px "Open Sans", sans-serif; fill: #2d8ccf; text-anchor: middle; }
.fa-gy { fill: #c8c6c4; }
.fblk { fill: #111; }
.pb1 { fill: #d8980f; }
.pb2 { fill: #f2c811; }
.pb3 { fill: #f8e17b; }
.wsun { fill: #f5b335; }
.wred { fill: #c4261d; }
.wcl { fill: #b8d4ee; stroke: #6da5d6; stroke-width: .6; }
.fod { fill: #0f78d4; }
.fcl { fill: #dcdcdc; stroke: #111; stroke-width: 1.2; }

.app { display: flex; flex-direction: column; width: 1366px; height: 768px; }

/* title bar */
.titlebar { display: flex; align-items: center; height: 34px; background: #3b3a39; color: #fff; flex: none; }
.qat { display: flex; gap: 14px; padding-left: 17px; width: 138px; }
.qi { width: 16px; height: 16px; }
.qi.dim { opacity: .75; }
.doc { font-size: 11.400px; width: 292px; white-space: nowrap; }
.searchbox { display: flex; align-items: center; width: 468px; height: 24px; background: #c8c6c4; border-radius: 2px; padding-left: 18px; color: #3e4a68; font-size: 12.500px; }
.mag { width: 16px; height: 16px; margin-right: 12px; color: #3b3a39; }
.user { margin-left: 200px; font-size: 11.100px; white-space: nowrap; width: 105px; }
.avatar { width: 16px; height: 16px; border-radius: 50%; background: #f3f2f1; }
.winctl { display: flex; gap: 36px; margin-left: 30px; }
.winctl svg { width: 10px; height: 10px; }

/* tabs */
.tabs { display: flex; height: 34px; flex: none; align-items: flex-start; padding-left: 23px; font-size: 13px; color: #323130; }
.tab { display: block; padding-top: 6px; height: 31px; line-height: 20px; }
.t-file { margin-right: 37px; }
.t-home { margin-right: 31px; border-bottom: 3px solid #f2c811; color: #252423; font-weight: 600; }
.t-insert { margin-right: 32px; }
.t-model { margin-right: 35px; }
.t-view { margin-right: 32px; }

/* ribbon */
.ribbon { position: relative; display: flex; height: 92px; flex: none; box-shadow: 0 1px 3px rgba(0,0,0,.22); z-index: 2; background: #f3f2f1; }
.group { display: flex; flex-direction: column; height: 88px; margin-top: 2px; border-right: 1px solid #c8c6c4; }
.btns { display: flex; flex: 1; padding-top: 7px; }
.glabel { text-align: center; font-size: 10px; line-height: 12px; height: 11px; color: #605e5c; }
.g-clip { width: 162px; }
.g-data { width: 345px; }
.g-data .btns { padding-left: 6px; }
.g-query { width: 117px; }
.g-query .btns { padding-left: 9px; }
.g-insert { width: 147px; }
.g-insert .btns { padding-left: 8px; }
.g-calc { width: 115px; }
.g-calc .btns { padding-left: 7px; }
.g-sens { width: 74px; }
.g-share { width: 60px; border-right: 0; }
.rb { display: flex; flex-direction: column; align-items: center; text-align: center; font-size: 11.500px; line-height: 16px; color: #484644; white-space: nowrap; letter-spacing: -.1px; }
.rb > span { margin-top: 3px; display: block; }
.ri { width: 30px; height: 30px; }
.w40 { width: 40px; } .w42 { width: 42px; } .w46 { width: 46px; } .w50 { width: 50px; } .w52 { width: 52px; } .w54 { width: 54px; } .w56 { width: 56px; }
.wfull { width: 100%; }
.faded { color: #a19f9d; }
.chev { display: inline-block; width: 6px; height: 5px; vertical-align: 1px; color: #484644; }
.faded .chev { color: #a19f9d; }
.cliplist { display: flex; flex-direction: column; gap: 6.500px; margin: -4px 0 0 -3px; font-size: 11.500px; color: #a19f9d; }
.ci { display: flex; align-items: center; gap: 3px; height: 18px; white-space: nowrap; }
.ci svg { width: 16px; height: 18px; }
.collapse { position: absolute; right: 4px; bottom: 6px; width: 10px; height: 6px; color: #484644; }

/* main */
.main { display: flex; flex: 1; min-height: 0; }
.rail { width: 41px; border-right: 1px solid #e1dfdd; flex: none; }
.rail-i { display: flex; align-items: center; justify-content: center; height: 39px; border-left: 3px solid transparent; padding-right: 3px; color: #323130; }
.rail-i.on { border-left-color: #f2c811; height: 40px; }
.rail-i svg { width: 16px; height: 16px; }

.center { position: relative; width: 964px; display: flex; flex-direction: column; flex: none; }
.notice { display: flex; align-items: center; height: 36px; flex: none; font-size: 11px; color: #323130; padding-left: 12px; letter-spacing: .2px; }
.info { width: 16px; height: 16px; margin-right: 8px; }
.notice-text { width: 750px; white-space: nowrap; }
.recover { width: 143px; height: 26px; background: #fff; border: 1px solid #c8c6c4; font: 600 11.200px "Open Sans", sans-serif; color: #323130; padding: 0; }
.close { width: 10px; height: 10px; margin-left: 12px; color: #484644; }

.canvas { display: flex; height: 472px; flex: none; background: #fff; overflow: hidden; }
.page { width: 941px; margin-left: 8px; flex: none; border-left: 2px dotted #605e5c; border-right: 2px dotted #605e5c; height: 472px; overflow: hidden; display: flex; flex-direction: column; }
.cscroll { width: 10px; height: 436px; background: #c8c6c4; margin-left: 3px; }

/* cards */
.cards { display: flex; height: 77px; flex: none; }
.card { text-align: center; color: #252423; overflow: hidden; }
.num { font: 400 37px/46px Roboto, sans-serif; height: 46px; letter-spacing: -.5px; }
.cap { font-size: 11px; line-height: 16px; color: rgba(40,40,40,.62); white-space: nowrap; }
.c-green { width: 157px; background: #24f604; }
.c-red { width: 137px; background: #f90909; margin-left: 32px; }
.c-yellow { width: 134px; background: #fafa00; margin-left: 45px; }
.c-blue { width: 149px; background: #0650ff; margin-left: 67px; }
.c-blue .num { letter-spacing: 1.500px; }
.c-magenta { width: 145px; background: #e208fb; margin-left: 71px; }

/* middle row */
.mid { display: flex; height: 236px; flex: none; border-bottom: 1px solid #ececec; margin-right: 4px; overflow: hidden; }
.barchart { width: 330px; padding: 15px 0 0 11px; flex: none; }
.vtitle { font-size: 11.200px; line-height: 14px; color: #252423; white-space: nowrap; }
.chartbody { display: flex; margin-top: 9px; }
.ytitle { width: 13px; height: 156px; writing-mode: vertical-rl; transform: rotate(180deg); text-align: center; font-size: 10px; line-height: 13px; color: #252423; }
.plotwrap { flex: 1; }
.plotrow { display: flex; height: 156px; }
.labels { width: 48px; display: flex; flex-direction: column; padding-top: 4px; font-size: 8.300px; line-height: 16.330px; text-align: right; color: #605e5c; white-space: nowrap; }
.plot { position: relative; width: 245px; margin-left: 7px; padding-top: 6px; }
.gridlines { position: absolute; inset: 0 auto 0 0; display: flex; }
.gridlines i { width: 68.800px; border-right: 1px dotted #d6d6d6; }
.bar { position: relative; height: 12px; margin-bottom: 4.330px; background: #118dff; outline: 1px solid #a8d2fa; }
.vscroll { width: 6px; height: 156px; background: #efefef; border-radius: 3px; }
.vthumb { height: 116px; background: #b3b3b3; border-radius: 3px; }
.ticks { display: flex; margin-left: 20.600px; height: 14px; margin-top: 1px; }
.ticks span { width: 68.800px; text-align: center; font-size: 8.500px; line-height: 14px; color: #605e5c; }
.xtitle { width: 230px; margin-left: 60px; text-align: center; font-size: 10px; line-height: 13px; color: #252423; }

/* table */
.tablewrap { width: 320px; margin-left: 45px; flex: none; padding-top: 17px; font-size: 9.200px; color: #323130; }
.tr { display: flex; height: 13.930px; line-height: 14px; white-space: nowrap; }
.tr.alt { background: #eeeeee; }
.tr.th { height: 22px; line-height: 17px; border-bottom: 1px solid #66b3ff; }
.td1 { width: 235px; padding-left: 4px; border-right: 1px solid #66b3ff; overflow: hidden; }
.td2 { flex: 1; text-align: right; padding-right: 4px; position: relative; }
.th .td1 { border-right: 0; }
.sort { position: absolute; left: 4px; top: 15px; width: 7px; height: 4px; }
.tscroll { width: 8px; margin: 17px 0 0 36px; background: #f0f0f0; height: 218px; display: flex; flex-direction: column; align-items: center; justify-content: space-between; padding: 3px 0; position: relative; }
.tscroll svg { width: 6px; height: 5px; }
.tthumb { position: absolute; top: 20px; left: 0; width: 8px; height: 14px; background: #c8c6c4; }
.vhead { display: flex; align-items: center; gap: 13px; align-self: flex-end; margin: 0 0 6px 121px; }
.vhead svg { width: 15px; height: 15px; }
.vhead .more { width: 16px; height: 4px; }

/* treemap */
.tm-title { padding: 1px 0 0 11px; height: 17px; flex: none; }
.treemap { display: flex; gap: 1px; height: 142px; margin-left: 10px; width: 923px; padding: 1px; background: #fff; outline: 1px solid #cfe5f7; outline-offset: -1px; overflow: hidden; flex: none; }
.t { color: #fff; font-size: 9.700px; line-height: 20px; padding: 0 0 0 3px; overflow: hidden; white-space: nowrap; }
.tcol { display: flex; flex-direction: column; gap: 1px; flex: none; }
.w101 { width: 101px; } .w39 { width: 39px; } .w32 { width: 32px; } .w38 { width: 38px; } .w33 { width: 33px; }
.tcol.w52 { width: 52px; }
.tgrid { display: grid; grid-template-columns: repeat(15, 1fr); grid-template-rows: repeat(7, 20px); grid-auto-flow: column; gap: 1px; width: 531px; flex: none; }
.tright { display: flex; flex-direction: column; gap: 1px; flex: 1; min-width: 0; }
.trow { display: flex; gap: 1px; }
.trow > .t { flex: 1; }
.h35 { height: 35px; flex: none; } .h34 { height: 33px; flex: none; } .h31 { height: 31px; flex: none; }
.fill { flex: 1; min-height: 0; }
.tstack { display: flex; flex-direction: column; gap: 1px; flex: 1; min-width: 0; }
.t.wide { flex: 1; }

/* page tabs */
.pagetabs { display: flex; height: 37px; flex: none; align-items: flex-start; padding-left: 3px; }
.pg-arrow { width: 6px; height: 10px; margin: 13px 18px 0 0; }
.pagetab { width: 78px; height: 35px; margin-left: -11px; padding-right: 4px; background: #fff; border-bottom: 3px solid #f2c811; text-align: center; font-size: 11.500px; line-height: 32px; color: #323130; }
.addtab { width: 37px; height: 32px; margin-top: 2px; background: #f2c811; text-align: center; font: 700 20px/30px "Liberation Sans", sans-serif; color: #6f6e6c; }

/* tooltip */
.tooltip { position: absolute; left: 657px; top: 451px; width: 209px; height: 67px; padding: 17px 0 0 16px; display: grid; grid-template-columns: 94px auto; column-gap: 12px; row-gap: 4px; align-content: start; background: rgba(59,58,57,.96); color: #c8c6c4; font-size: 11.200px; line-height: 15px; white-space: nowrap; z-index: 5; }
.tk { text-align: right; }
.tv { font-weight: 700; color: #d8d8d8; }
.tip-arrow { position: absolute; left: -8px; top: 45px; width: 0; height: 0; border-style: solid; border-width: 8px 8px 8px 0; border-color: transparent rgba(59,58,57,.96) transparent transparent; }

/* viz pane */
.viz { width: 180px; border-left: 1px solid #e1dfdd; border-right: 1px solid #e1dfdd; flex: none; }
.phead { display: flex; justify-content: space-between; align-items: center; height: 38px; padding: 0 9px 0 7px; font-size: 15px; font-weight: 500; color: #252423; letter-spacing: .1px; }
.dbl { width: 13px; height: 13px; color: #484644; }
.build { font-size: 10.500px; font-weight: 600; padding-left: 7px; line-height: 16px; color: #252423; }
.vtabs { display: flex; margin-top: 3px; padding-left: 7px; gap: 32px; }
.vtab { width: 32px; height: 32px; display: flex; align-items: center; justify-content: center; }
.vtab.on { background: #c8c6c4; }
.vtab svg { width: 24px; height: 24px; }
.vline { position: relative; height: 12px; border-bottom: 1px solid #a19f9d; }
.vline i { position: absolute; left: 17px; bottom: -5px; width: 11px; height: 11px; background: #f3f2f1; border-left: 1px solid #a19f9d; border-top: 1px solid #a19f9d; transform: rotate(45deg); }
.gallery { display: grid; grid-template-columns: repeat(6, 28px); grid-auto-rows: 28px; padding: 9px 0 0 5px; height: 210px; align-items: center; justify-items: center; }
.gallery svg { width: 18px; height: 18px; }
.gallery .gmore { height: 4px; width: 16px; }
.wells { border-top: 1px solid #e1dfdd; padding: 10px 5px 0 3px; font-size: 11px; color: #323130; }
.wlabel { padding-left: 8px; line-height: 16px; color: #323130; }
.well { height: 28px; margin-top: 6px; border: 1px dashed #c8c6c4; background: #fff; padding-left: 10px; line-height: 26px; white-space: nowrap; font-size: 11.500px; }
.well.w2 { height: 26px; margin-top: 5px; padding-left: 8px; line-height: 24px; }
.drill { padding-left: 8px; margin-top: 10px; font-weight: 600; line-height: 16px; color: #484644; }
.opt { display: flex; justify-content: space-between; align-items: center; padding-left: 8px; height: 27px; color: #484644; }
.drill + .opt { margin-top: 3px; }
.toggle { display: flex; align-items: center; width: 32px; height: 16px; border-radius: 8px; font-size: 8.500px; padding: 0 3px; justify-content: space-between; }
.toggle i { width: 8px; height: 8px; border-radius: 50%; display: block; }
.toggle.off { background: #fff; border: 1px solid #8a8886; color: #605e5c; }
.toggle.off i { background: #605e5c; }
.toggle.on { background: #605e5c; color: #fff; }
.toggle.on i { background: #fff; }

/* fields pane */
.fields { flex: 1; min-width: 0; }
.fields .phead { padding: 0 8px 0 9px; }
.fsearch { display: flex; align-items: center; height: 27px; margin: 8px 4px 0 5px; background: #fff; border: 1px solid #8a8886; padding-left: 7px; font-size: 12px; color: #484644; border-radius: 1px; }
.mag2 { width: 13px; height: 13px; margin-right: 8px; color: #3b3a39; }
.flist { list-style: none; margin: 8px 0 0; padding: 0 0 0 10px; font-size: 11.500px; color: #605e5c; }
.flist li { display: flex; align-items: center; height: 24px; white-space: nowrap; }
.fchev { width: 6px; height: 10px; margin-right: 7px; }
.ftbl { width: 14px; height: 14px; margin-right: 5px; }

/* status */
.status { display: flex; justify-content: space-between; align-items: center; height: 22px; flex: none; border-top: 2px solid #e1dfdd; padding: 0 5px; font-size: 11.500px; color: #605e5c; }
.zoom { display: flex; align-items: center; }
.zm { width: 7px; font-weight: 700; }
.slider { position: relative; width: 100px; height: 1px; background: #605e5c; }
.knob { position: absolute; left: 34px; top: -6px; width: 4px; height: 13px; background: #605e5c; }
.mid-tick { position: absolute; left: 50px; top: -3px; width: 1px; height: 7px; background: #605e5c; }
.zp { margin-left: 6px; width: 24px; font-size: 14px; }
.pct { width: 42px; }
.fit { width: 16px; height: 16px; margin-right: 18px; color: #484644; }
.upd { white-space: nowrap; }

/* taskbar */
.taskbar { display: flex; align-items: center; height: 41px; flex: none; border-top: 1px solid #0a84d6; background: linear-gradient(90deg, #cfe5ee, #d6dfec); font-size: 14px; color: #111; }
.win { width: 16px; height: 16px; margin-left: 16px; }
.tsearch { display: flex; align-items: center; width: 343px; height: 40px; margin-left: 16px; background: #fff; border: 1px solid #ccc; padding-left: 11px; color: #222; font-size: 14px; }
.tmag { width: 16px; height: 16px; margin-right: 12px; color: #111; }
.cortana { width: 16px; height: 16px; border: 2.500px solid #111; border-radius: 50%; margin-left: 17px; }
.tview { width: 18px; height: 18px; margin-left: 30px; }
.tapp { display: flex; align-items: center; justify-content: center; width: 48px; height: 40px; margin-left: 19px; background: #e9f2f7; border-bottom: 2px solid #0a78d4; }
.tapp svg { width: 20px; height: 24px; }
.tray { display: flex; align-items: center; margin-left: auto; height: 40px; width: 414px; position: relative; }
.trayscroll { display: flex; flex-direction: column; justify-content: space-between; align-items: center; width: 16px; height: 40px; background: #e4eef6; padding: 8px 0; }
.trayscroll svg { width: 8px; height: 5px; }
.helpic { position: relative; width: 22px; height: 22px; margin-left: 15px; border-radius: 50%; background: #1277cf; border: 2px solid #fff; color: #fff; font: 700 15px/18px "Liberation Sans", sans-serif; text-align: center; }
.helpic i { position: absolute; right: -5px; bottom: -4px; width: 11px; height: 11px; border-radius: 50%; background: #f5a623; font: 700 8px/11px "Liberation Sans", sans-serif; color: #fff; }
.wx { width: 24px; height: 26px; margin-left: 26px; }
.temp { margin-left: 4px; width: 43px; font-size: 13.500px; }
.ti { margin-right: 10px; }
.w12 { width: 12px; height: 8px; margin-left: 7px; margin-right: 10px; }
.w16 { width: 17px; height: 12px; margin-right: 9px; }
.w14 { width: 14px; height: 14px; margin-right: 11px; }
.clock { display: flex; flex-direction: column; align-items: center; width: 60px; margin-left: 1px; font-size: 12px; line-height: 18px; }
.notif { position: relative; width: 16px; height: 16px; margin-left: 14px; }
.notif svg { width: 16px; height: 16px; }
.badge { position: absolute; right: -7px; bottom: -7px; width: 15px; height: 15px; border-radius: 50%; background: #bdbdbd; border: 1px solid #333; font-size: 9px; line-height: 13px; text-align: center; color: #111; }
```
